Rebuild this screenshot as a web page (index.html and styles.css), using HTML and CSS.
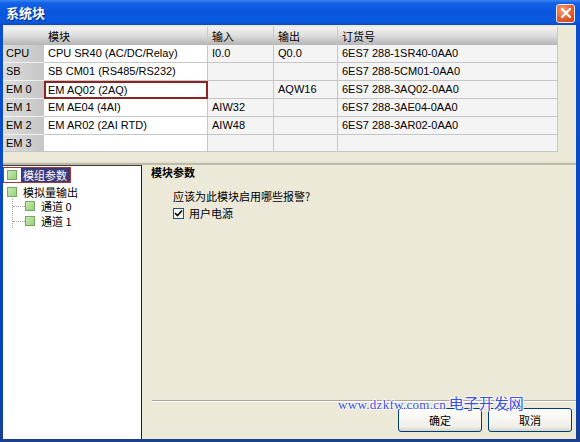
FILE: index.html
```html
<!DOCTYPE html>
<html>
<head>
<meta charset="utf-8">
<link rel="stylesheet" href="styles.css">
</head>
<body>
<div class="window">
  <div class="titlebar">
    <span class="title">系统块</span>
    <span class="close">
      <svg width="12" height="12" viewBox="0 0 12 12"><path d="M2 2 L10 10 M10 2 L2 10" stroke="#fff" stroke-width="2.2" stroke-linecap="round"/></svg>
    </span>
  </div>
  <div class="client">
    <div class="grid-area">
      <div class="grid">
        <div class="hc corner"></div><div class="hc">模块</div><div class="hc">输入</div><div class="hc">输出</div><div class="hc">订货号</div>

        <div class="rh">CPU</div><div class="c w">CPU SR40 (AC/DC/Relay)</div><div class="c">I0.0</div><div class="c">Q0.0</div><div class="c">6ES7 288-1SR40-0AA0</div>
        <div class="rh">SB</div><div class="c w">SB CM01 (RS485/RS232)</div><div class="c"></div><div class="c"></div><div class="c">6ES7 288-5CM01-0AA0</div>
        <div class="rh">EM 0</div><div class="c w sel">EM AQ02 (2AQ)</div><div class="c"></div><div class="c">AQW16</div><div class="c">6ES7 288-3AQ02-0AA0</div>
        <div class="rh">EM 1</div><div class="c w">EM AE04 (4AI)</div><div class="c">AIW32</div><div class="c"></div><div class="c">6ES7 288-3AE04-0AA0</div>
        <div class="rh">EM 2</div><div class="c w">EM AR02 (2AI RTD)</div><div class="c">AIW48</div><div class="c"></div><div class="c">6ES7 288-3AR02-0AA0</div>
        <div class="rh last">EM 3</div><div class="c w last"></div><div class="c last"></div><div class="c last"></div><div class="c last"></div>
      </div>
    </div>
    <div class="splitter"></div>
    <div class="lower">
      <div class="tree">
        <div class="node selected"><span class="ico"></span><span class="lbl">模组参数</span></div>
        <div class="node"><span class="ico"></span><span class="lbl">模拟量输出</span></div>
        <div class="children">
          <div class="node child"><span class="hline"></span><span class="ico"></span><span class="lbl">通道 0</span></div>
          <div class="node child"><span class="hline"></span><span class="ico"></span><span class="lbl">通道 1</span></div>
        </div>
      </div>
      <div class="panel">
        <div class="panel-title">模块参数</div>
        <div class="question">应该为此模块启用哪些报警?</div>
        <label class="check"><span class="box"><svg width="9" height="9" viewBox="0 0 9 9"><path d="M1 4 L3.5 6.5 L8 1.5" fill="none" stroke="#000" stroke-width="1.6"/></svg></span>用户电源</label>
        <div class="spacer"></div>
        <div class="sep"></div>
        <div class="buttons">
          <div class="btn">确定</div>
          <div class="btn">取消</div>
        </div>
        <div class="watermark"><span class="wm-url">www.dzkfw.com.cn</span> <span class="wm-cn">电子开发网</span></div>
      </div>
    </div>
  </div>
</div>
</body>
</html>
```

FILE: styles.css
```css
* { box-sizing: border-box; }
html, body { margin: 0; padding: 0; }
body {
  width: 580px;
  height: 442px;
  overflow: hidden;
  font-family: "Liberation Sans", "Noto Sans CJK SC", sans-serif;
  font-size: 11px;
  color: #000;
}
.window {
  width: 580px;
  height: 442px;
  display: flex;
  flex-direction: column;
  background: linear-gradient(to bottom, #0a4fd0, #0842b8 90%, #1c3f8e);
}
.titlebar {
  height: 25px;
  flex: none;
  display: flex;
  align-items: center;
  justify-content: space-between;
  padding: 0 5px 0 6px;
  background: linear-gradient(to bottom, #3b86f5 0%, #1362e6 12%, #0756dd 50%, #0a5ae2 85%, #0a49c4 100%);
}
.title {
  color: #fff;
  font-weight: bold;
  font-size: 13px;
  font-family: "Noto Sans CJK SC", sans-serif;
  letter-spacing: 0;
  text-shadow: 1px 1px 0 #0a2a80;
}
.close {
  width: 19px;
  height: 19px;
  margin-top: 1px;
  border: 1px solid #f6e8e0;
  border-radius: 3px;
  background: radial-gradient(circle at 35% 30%, #f4a080, #de5a2c 60%, #c8431c);
  display: flex;
  align-items: center;
  justify-content: center;
}
.client {
  flex: 1;
  margin: 0 4px 3px 3px;
  background: #ece9d8;
  display: flex;
  flex-direction: column;
  min-height: 0;
}
.grid-area {
  padding-top: 2px;
  flex: none;
}
.grid {
  display: grid;
  grid-template-columns: 41px 164px 66px 64px 220px;
  grid-template-rows: 18px repeat(5, 18px) 17px;
  width: 555px;
  background: #fff;
  border-right: 1px solid #c8c8c8;
}
.hc {
  background: linear-gradient(to bottom, #f3f3f3 0%, #dedede 45%, #b4b4b4 100%);
  border-right: 1px solid #c8c8c8;
  padding: 0 4px;
  line-height: 18px;
  font-family: "Noto Sans CJK SC", sans-serif;
  font-size: 11px;
  white-space: nowrap;
}
.hc.corner { border-right: none; }
.rh {
  background: linear-gradient(to right, #dcdcdc, #c6c6c6);
  border-bottom: 1px solid #f0f0f0;
  padding: 0 3px;
  line-height: 17px;
  white-space: nowrap;
}
.c {
  background: #f4f4f4;
  border-right: 1px solid #c6c6c6;
  border-bottom: 1px solid #c6c6c6;
  padding: 0 4px;
  line-height: 17px;
  white-space: nowrap;
  overflow: hidden;
}
.c.w { background: #fff; }
.c.last, .rh.last { border-bottom: 1px solid #c6c6c6; }
.c.sel {
  border: 2px solid #8c2424;
  line-height: 14px;
  padding: 0 2px;
}
.splitter {
  height: 13px;
  flex: none;
  border-bottom: 2px solid #bdbaa8;
  background: linear-gradient(to bottom, #ece9d8 0%, #ece9d8 80%, #e0ddcc 100%);
}
.lower {
  flex: 1;
  display: flex;
  min-height: 0;
}
.tree {
  width: 139px;
  flex: none;
  background: #fff;
  border-top: 1px solid #404040;
  border-right: 1px solid #202020;
  padding-top: 1px;
  font-family: "Noto Sans CJK SC", sans-serif;
  font-size: 11px;
}
.node {
  display: flex;
  align-items: center;
  height: 15px;
  padding-left: 4px;
  white-space: nowrap;
}
.node.selected { height: 16px; margin-bottom: 1px; }
.ico {
  width: 10px;
  height: 10px;
  flex: none;
  border: 1px solid #78a860;
  background: linear-gradient(135deg, #c8eab0, #98d080);
  margin-right: 6px;
}
.node.selected {
  width: 68px;
  border: 1px solid #a03838;
  padding-left: 3px;
  background: linear-gradient(to right, #fff 0, #fff 17px, #3c3a78 17px);
}
.node.selected .lbl { color: #fff; padding: 0 2px 0 0; }
.children {
  position: relative;
  margin-left: 9px;
  border-left: 1px dotted #a0a0a0;
  height: 29px;
  margin-top: -1px;
}
.node.child { padding-left: 0; height: 14px; margin-top: 1px; }
.hline {
  width: 12px;
  border-top: 1px dotted #a0a0a0;
  flex: none;
}
.panel {
  flex: 1;
  position: relative;
  display: flex;
  flex-direction: column;
  padding: 0 0 7px 9px;
  font-family: "Noto Sans CJK SC", sans-serif;
}
.panel-title {
  font-weight: bold;
  line-height: 14px;
  margin-top: 0;
}
.question {
  margin: 10px 0 0 22px;
  line-height: 14px;
}
.check {
  display: flex;
  align-items: center;
  margin: 3px 0 0 22px;
  line-height: 14px;
}
.box {
  width: 11px;
  height: 11px;
  border: 1px solid #1c5180;
  background: #f8f8f4;
  margin-right: 5px;
  display: flex;
  align-items: center;
  justify-content: center;
}
.spacer { flex: 1; }
.sep {
  height: 2px;
  margin-left: 1px;
  border-top: 1px solid #aca899;
  border-bottom: 1px solid #fff;
}
.buttons {
  display: flex;
  justify-content: flex-end;
  gap: 6px;
  margin-top: 6px;
  padding-right: 4px;
}
.btn {
  width: 84px;
  height: 24px;
  border: 1px solid #003c74;
  border-radius: 3px;
  background: linear-gradient(to bottom, #fefefe, #f0efe8 80%, #d8d5c8);
  display: flex;
  align-items: center;
  justify-content: center;
  font-size: 11px;
}
.watermark {
  position: absolute;
  left: 196px;
  bottom: 26px;
  color: #3a4ee0;
  white-space: nowrap;
  text-shadow: 1px 0 0 #fff, -1px 0 0 #fff, 0 1px 0 #fff, 0 -1px 0 #fff;
}
.wm-url {
  font-family: "Liberation Serif", serif;
  font-size: 13px;
  letter-spacing: 0.3px;
}
.wm-cn {
  font-family: "Noto Sans CJK SC", sans-serif;
  font-size: 15px;
}
```
